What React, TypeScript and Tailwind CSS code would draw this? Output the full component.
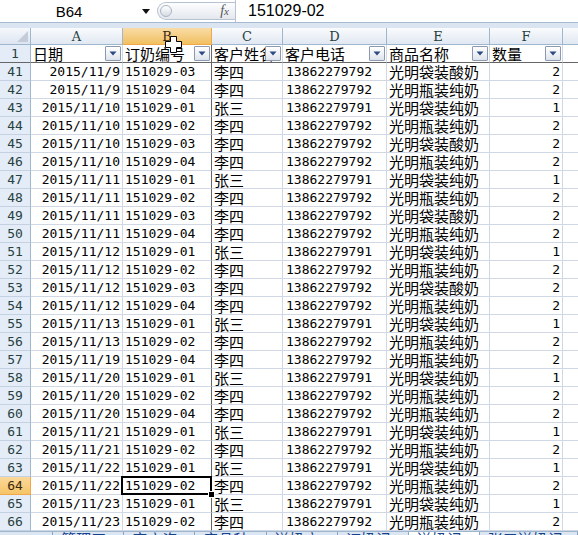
import React from "react";

type Row = { n: number; date: string; no: string };

const raw: [number, string, string][] = [
  [41, "2015/11/9", "03"],
  [42, "2015/11/9", "04"],
  [43, "2015/11/10", "01"],
  [44, "2015/11/10", "02"],
  [45, "2015/11/10", "03"],
  [46, "2015/11/10", "04"],
  [47, "2015/11/11", "01"],
  [48, "2015/11/11", "02"],
  [49, "2015/11/11", "03"],
  [50, "2015/11/11", "04"],
  [51, "2015/11/12", "01"],
  [52, "2015/11/12", "02"],
  [53, "2015/11/12", "03"],
  [54, "2015/11/12", "04"],
  [55, "2015/11/13", "01"],
  [56, "2015/11/13", "02"],
  [57, "2015/11/19", "04"],
  [58, "2015/11/20", "01"],
  [59, "2015/11/20", "02"],
  [60, "2015/11/20", "04"],
  [61, "2015/11/21", "01"],
  [62, "2015/11/21", "02"],
  [63, "2015/11/22", "01"],
  [64, "2015/11/22", "02"],
  [65, "2015/11/23", "01"],
  [66, "2015/11/23", "02"],
];

const rows: Row[] = raw.map(([n, date, no]) => ({ n, date, no }));

// 订单尾号决定客户/商品
function detail(no: string) {
  if (no === "01") return { name: "张三", tel: "13862279791", prod: "光明袋装纯奶", qty: 1 };
  if (no === "03") return { name: "李四", tel: "13862279792", prod: "光明袋装酸奶", qty: 2 };
  return { name: "李四", tel: "13862279792", prod: "光明瓶装纯奶", qty: 2 };
}

const grid = "grid grid-cols-[31px_92px_89px_71px_104px_103px_73px_1fr]";
const cell = "border-r border-b border-[#d0d7e5] whitespace-nowrap flex items-end text-black";
const clip = "overflow-hidden";
const num = "font-['DejaVu_Sans_Mono',monospace] text-[13px] leading-[16px]";
const cjk = "font-['Noto_Sans_CJK_SC',sans-serif] text-[15px] leading-[17px]";
const freeze = "border-r-[#666]";

function FilterBtn() {
  return (
    <div className="absolute right-[1px] top-[1px] w-[16px] h-[15px] border border-[#8b9ab0] rounded-[1px] bg-gradient-to-b from-white to-[#dfe4ec] flex items-center justify-center">
      <svg width="8" height="5" viewBox="0 0 8 5">
        <path d="M0.5 0.5 H7.5 L4 4.5 Z" fill="#2a4a82" />
      </svg>
    </div>
  );
}

const headers = ["日期", "订奶编号", "客户姓名", "客户电话", "商品名称", "数量"];
const letters = ["A", "B", "C", "D", "E", "F"];
const tabs = ["管理工具", "客户资料", "产品种类", "送奶方式", "订奶记录", "送奶记录", "张三送奶记录"];

export default function App() {
  return (
    <div className="w-[578px] h-[535px] overflow-hidden bg-white relative select-none">
      {/* 编辑栏 */}
      <div className="h-[28px] bg-[#dbe5f1] flex flex-col">
        <div className="h-[23px] bg-white border-b border-[#a7bad3] flex items-center">
          <div className="w-[138px] text-center font-['Liberation_Sans',sans-serif] text-[15px] text-black leading-none">
            B64
          </div>
          <div className="w-[16px] flex justify-center">
            <svg width="8" height="5" viewBox="0 0 8 5">
              <path d="M0 0 H8 L4 5 Z" fill="#111" />
            </svg>
          </div>
          <div className="ml-[3px] w-[78px] h-[18px] rounded-l-full border border-[#b8c3d1] border-r-0 bg-gradient-to-b from-[#fdfdfe] to-[#e4e8ee] flex items-center">
            <div className="ml-[2px] w-[12px] h-[12px] rounded-full border border-[#aab4c2] bg-gradient-to-b from-white to-[#d6dce5]" />
            <span className="ml-auto mr-[6px] font-['Liberation_Serif',serif] italic text-[14px] text-[#555] leading-none">
              f<span className="text-[11px]">x</span>
            </span>
          </div>
          <div className="h-full border-l border-[#b8c3d1] pl-[12px] flex items-center font-['Liberation_Sans',sans-serif] text-[16px] text-black leading-none">
            151029-02
          </div>
        </div>
      </div>

      {/* 列标 */}
      <div className={`${grid} h-[17px]`}>
        <div className="relative border-r border-b border-[#9eb6ce] bg-gradient-to-b from-[#f5f8fc] to-[#dde5f0]">
          <svg className="absolute right-[2px] bottom-[2px]" width="11" height="11" viewBox="0 0 11 11">
            <path d="M11 0 V11 H0 Z" fill="#c3ccd8" />
          </svg>
        </div>
        {letters.map((l) => (
          <div
            key={l}
            className={`border-r border-b flex items-center justify-center font-['DejaVu_Serif',serif] text-[13px] leading-none ${
              l === "B"
                ? "bg-gradient-to-b from-[#f9dca6] to-[#f1c05f] border-[#f0a84a] text-[#3b2a10]"
                : "bg-gradient-to-b from-[#f9fbfd] to-[#e1e8f2] border-[#9eb6ce] text-[#27413e]"
            }`}
          >
            {l}
          </div>
        ))}
        <div className="border-b border-[#9eb6ce] bg-gradient-to-b from-[#f9fbfd] to-[#e1e8f2]" />
      </div>

      {/* 表头行 */}
      <div className={`${grid} auto-rows-[18px]`}>
        <div className="border-r border-b border-[#9eb6ce] border-b-[#666] bg-[#e4ecf7] flex items-center justify-center font-['DejaVu_Sans_Mono',monospace] text-[13px] text-[#27413e]">
          1
        </div>
        {headers.map((h, i) => (
          <div key={h} className={`${cell} ${clip} ${cjk} relative pl-[2px] border-b-[#666] ${i === 1 ? freeze : ""}`}>
            {h}
            <FilterBtn />
          </div>
        ))}
        <div className="border-b border-[#666]" />

        {rows.map((r) => {
          const d = detail(r.no);
          const sel = r.n === 64;
          return (
            <React.Fragment key={r.n}>
              <div
                className={`border-r border-b flex items-center justify-center font-['DejaVu_Sans_Mono',monospace] text-[13px] ${
                  sel
                    ? "bg-gradient-to-b from-[#fbd99a] to-[#f6c467] border-[#f0a84a] text-[#3b2a10]"
                    : "bg-[#e4ecf7] border-[#c3d1e3] border-r-[#9eb6ce] text-[#27413e]"
                }`}
              >
                {r.n}
              </div>
              <div className={`${cell} ${clip} ${num} justify-end pr-[2px]`}>{r.date}</div>
              <div className={`${cell} ${num} ${freeze} pl-[2px] relative ${sel ? "z-10" : clip}`}>
                151029-{r.no}
                {sel && (
                  <>
                    <div className="absolute -left-[2px] -top-[1px] -right-[1px] -bottom-[1px] border-2 border-black" />
                    <div className="absolute -right-[4px] -bottom-[4px] w-[7px] h-[7px] bg-black border border-white" />
                  </>
                )}
              </div>
              <div className={`${cell} ${clip} ${cjk} pl-[2px]`}>{d.name}</div>
              <div className={`${cell} ${clip} ${num} pl-[3px]`}>{d.tel}</div>
              <div className={`${cell} ${clip} ${cjk} pl-[2px]`}>{d.prod}</div>
              <div className={`${cell} ${clip} ${num} justify-end pr-[2px]`}>{d.qty}</div>
              <div className="border-b border-[#d0d7e5]" />
            </React.Fragment>
          );
        })}
      </div>

      {/* 工作表标签 */}
      <div className="h-[20px] border-t border-[#9eb6ce] bg-[#dce6f3] flex font-['Noto_Sans_CJK_SC',sans-serif] text-[15px] leading-[11px] text-[#15428b]">
        <div className="w-[59px] border-r border-[#8ea4c1]" />
        {tabs.map((t) => (
          <div
            key={t}
            className={`px-[8px] pt-[1px] border-r border-[#8ea4c1] ${t === "送奶记录" ? "bg-white" : ""}`}
          >
            {t}
          </div>
        ))}
      </div>

      {/* 鼠标指针 */}
      <svg className="absolute left-[165px] top-[36px] z-20" width="17" height="17" viewBox="0 0 17 17">
        <path
          d="M5.5 0.5 H11.5 V5.5 H16.5 V11.5 H11.5 V16.5 H5.5 V11.5 H0.5 V5.5 H5.5 Z"
          fill="white"
          stroke="black"
          strokeWidth="1"
        />
      </svg>
    </div>
  );
}
